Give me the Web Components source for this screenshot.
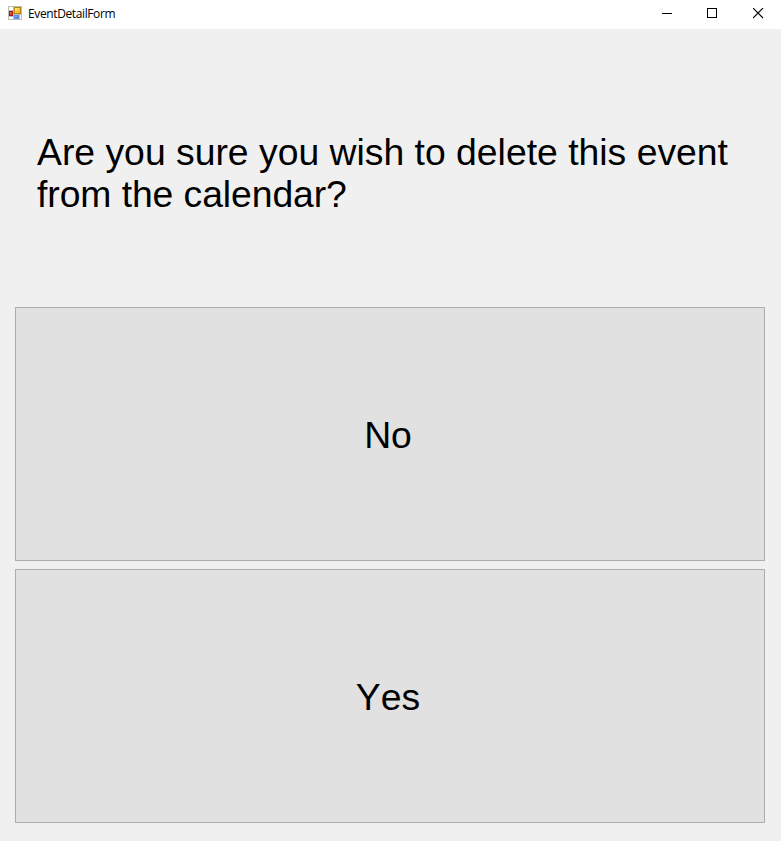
<!DOCTYPE html>
<html lang="en">
<head>
<meta charset="utf-8">
<title>EventDetailForm</title>
<style>
html,body{margin:0;height:100%;background:#f0f0f0;overflow:hidden}
</style>
</head>
<body>
<form-window>
  <title-bar slot="title">EventDetailForm</title-bar>
  <prompt-label>Are you sure you wish to delete this event <span style="letter-spacing:-.08px">from the calendar?</span></prompt-label>
  <flat-button>No</flat-button>
  <flat-button>Yes</flat-button>
</form-window>
<script>
const define = (name, html) => {
  const template = document.createElement('template');
  template.innerHTML = html;
  customElements.define(name, class extends HTMLElement {
    constructor() {
      super();
      this.attachShadow({ mode: 'open' }).append(template.content.cloneNode(true));
    }
  });
};

define('app-icon', `
<style>:host{display:block;width:14px;height:14px}svg{display:block}</style>
<svg width="14" height="14" viewBox="0 0 14 14" shape-rendering="crispEdges">
  <defs>
    <linearGradient id="y" x2="1" y2="1"><stop stop-color="#fff0a0"/><stop offset=".45" stop-color="#fbd03c"/><stop offset="1" stop-color="#e9a820"/></linearGradient>
    <linearGradient id="b" x2="1" y2="1"><stop stop-color="#8dbcff"/><stop offset="1" stop-color="#3a75dc"/></linearGradient>
  </defs>
  <path fill="#bdbdbd" d="M0 0h14v14H0z"/>
  <path fill="#fff" d="M1 1h4v3H1zM1 11h4v2H1zM12 9h1v4h-1z"/>
  <path fill="#a81414" d="M1 5h4v5H1z"/><path fill="#d9443b" d="M2 6h2v3H2z"/><path fill="#f08a78" d="M2 6h1v1H2z"/>
  <path fill="#b8860b" d="M6 1h7v7H6z"/><path fill="url(#y)" d="M7 2h5v5H7z"/>
  <path fill="#5a8fe6" d="M6 9h5v4H6z"/><path fill="url(#b)" d="M7 10h3v2H7z"/>
</svg>`);

define('caption-buttons', `
<style>
:host{display:flex}
span{box-sizing:border-box;width:45px;height:29px;padding:8px 0 0 16px}
.close{padding-left:17px}
svg{display:block}
</style>
<span><svg width="11" height="11"><path fill="#000" d="M0 5h10v1H0z"/></svg></span>
<span><svg width="11" height="11"><path fill="#000" fill-rule="evenodd" d="M0 0h10v10H0zM1 1v8h8V1z"/></svg></span>
<span class="close"><svg width="11" height="11"><path stroke="#000" stroke-width="1.1" d="M0 0l10 10M10 0L0 10"/></svg></span>`);

define('title-bar', `
<style>
:host{display:flex;align-items:flex-start;box-sizing:border-box;height:29px;background:#fff;color:#000;font:12px/28px "Open Sans","Noto Sans",sans-serif}
app-icon{margin:6px 6px 0 8px}
.name{flex:1;letter-spacing:-.38px}
</style>
<app-icon></app-icon><span class="name"><slot></slot></span><caption-buttons></caption-buttons>`);

define('prompt-label', `
<style>
:host{display:flex;align-items:center;box-sizing:border-box;padding:18px 20px 0 22px;font:37.33px/42px "Liberation Sans",Arial,sans-serif;color:#000}
</style>
<div><slot></slot></div>`);

define('flat-button', `
<style>
:host{display:block}
button{display:flex;align-items:center;justify-content:center;box-sizing:border-box;width:100%;height:100%;padding:2px 4px 0 0;border:1px solid #adadad;background:#e1e1e1;color:#000;font:37.33px/42px "Liberation Sans",Arial,sans-serif;font-kerning:none}
</style>
<button><slot></slot></button>`);

define('form-window', `
<style>
:host{display:flex;flex-direction:column;height:841px;background:#f0f0f0}
main{flex:1;display:grid;grid-template-rows:1fr 254px 254px;row-gap:8px;padding:0 16px 18px 15px}
</style>
<slot name="title"></slot>
<main><slot></slot></main>`);
</script>
</body>
</html>
